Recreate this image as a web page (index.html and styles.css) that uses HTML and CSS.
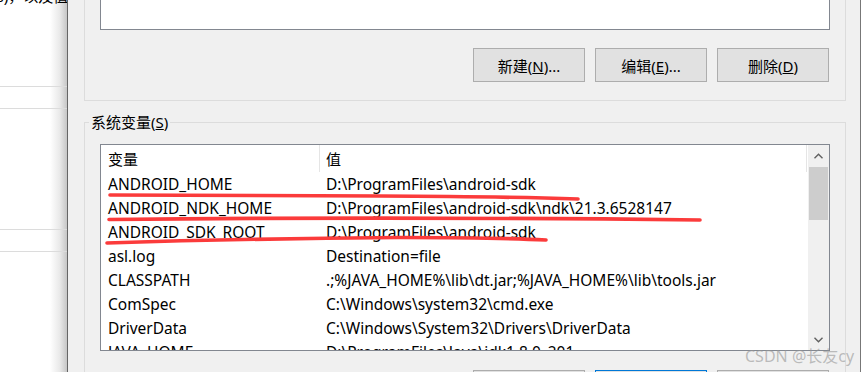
FILE: index.html
```html
<!DOCTYPE html>
<html lang="zh-CN">
  <head>
    <meta charset="UTF-8" />
    <title>环境变量</title>
    <link rel="stylesheet" href="styles.css">
  </head>
  <body>
    <div class="screen">
      <div class="backwin">
        <p class="backwin-text">(s)，以及值</p>
        <div class="backwin-row first"></div>
        <div class="backwin-row second"></div>
      </div>

      <div class="dialog">
        <div class="group group-user">
          <div class="listbox listbox-user"></div>
          <div class="btn-row">
            <button class="btn">新建(<u>N</u>)...</button>
            <button class="btn">编辑(<u>E</u>)...</button>
            <button class="btn">删除(<u>D</u>)</button>
          </div>
        </div>

        <fieldset class="group group-system">
          <legend>系统变量(<u>S</u>)</legend>
          <div class="listbox listbox-system">
            <div class="list-body">
              <div class="list-head">
                <span class="col-name">变量</span>
                <span class="col-value">值</span>
              </div>
              <div class="list-row"><span class="col-name">ANDROID_HOME</span><span class="col-value">D:\ProgramFiles\android-sdk</span></div>
              <div class="list-row"><span class="col-name">ANDROID_NDK_HOME</span><span class="col-value">D:\ProgramFiles\android-sdk\ndk\21.3.6528147</span></div>
              <div class="list-row"><span class="col-name">ANDROID_SDK_ROOT</span><span class="col-value">D:\ProgramFiles\android-sdk</span></div>
              <div class="list-row"><span class="col-name">asl.log</span><span class="col-value">Destination=file</span></div>
              <div class="list-row"><span class="col-name">CLASSPATH</span><span class="col-value">.;%JAVA_HOME%\lib\dt.jar;%JAVA_HOME%\lib\tools.jar</span></div>
              <div class="list-row"><span class="col-name">ComSpec</span><span class="col-value">C:\Windows\system32\cmd.exe</span></div>
              <div class="list-row"><span class="col-name">DriverData</span><span class="col-value">C:\Windows\System32\Drivers\DriverData</span></div>
              <div class="list-row"><span class="col-name">JAVA_HOME</span><span class="col-value">D:\ProgramFiles\Java\jdk1.8.0_201</span></div>
            </div>
            <div class="scrollbar">
              <div class="scroll-arrow">
                <svg width="9" height="6" viewBox="0 0 9 6"><polyline points="0.5,5.2 4.5,1.2 8.5,5.2" fill="none" stroke="#606060" stroke-width="1.4"/></svg>
              </div>
              <div class="scroll-thumb"></div>
              <div class="scroll-track"></div>
              <div class="scroll-arrow">
                <svg width="9" height="6" viewBox="0 0 9 6"><polyline points="0.5,0.8 4.5,4.8 8.5,0.8" fill="none" stroke="#606060" stroke-width="1.4"/></svg>
              </div>
            </div>
          </div>
          <div class="btn-row">
            <button class="btn">新建(<u>W</u>)...</button>
            <button class="btn btn-default">编辑(<u>I</u>)...</button>
            <button class="btn">删除(<u>L</u>)</button>
          </div>
        </fieldset>
      </div>

      <!-- 红色标注线 -->
      <svg class="marks" width="861" height="372" viewBox="0 0 861 372">
        <path d="M110 195 L380 196 Q500 196.5 578 199" />
        <path d="M109 219.5 Q400 216.5 700 220" />
        <path d="M107 243 Q250 238.5 400 237.5 Q500 237.5 546 240" />
      </svg>

      <div class="watermark">CSDN @长友cy</div>
    </div>
  </body>
</html>
```

FILE: styles.css
```css
body {
  margin: 0;
  overflow: hidden;
  background: #f0f0f0;
  font-family: "Noto Sans", "Noto Sans CJK SC", sans-serif;
  font-size: 15px;
  color: #000;
}
.screen {
  position: relative;
  display: flex;
  width: 861px;
  height: 372px;
  overflow: hidden;
}
.backwin {
  width: 67px;
  flex: none;
  overflow: hidden;
  background: linear-gradient(to right, #fff 0, #fff 50px, #e8e8e8 60px, #c6c6c6 67px);
}
.backwin-text {
  margin: -14px 0 0 -8px;
  line-height: 20px;
  white-space: nowrap;
}
.backwin-row {
  height: 21px;
  border-top: 1px solid #dcdcdc;
  border-bottom: 1px solid #dcdcdc;
}
.backwin-row.first {
  margin-top: 80px;
}
.backwin-row.second {
  margin-top: 120px;
}
.dialog {
  box-sizing: border-box;
  width: 794px;
  flex: none;
  padding: 0 14px 0 16px;
  border-left: 1px solid #666;
  border-right: 1px solid #777;
  background: #f0f0f0;
}
.group {
  border: 1px solid #dcdcdc;
  padding: 0 15px;
}
.group-user {
  border-top: none;
  padding-bottom: 18px;
}
.listbox {
  box-sizing: border-box;
  width: 730px;
  border: 1px solid #828790;
  background: #fff;
}
.listbox-user {
  height: 30px;
  border-top: none;
}
.btn-row {
  display: flex;
  justify-content: flex-end;
  gap: 10px;
  margin-top: 18px;
  padding-right: 1px;
}
.btn {
  width: 112px;
  height: 34px;
  border: 1px solid #adadad;
  background: #e1e1e1;
  font-family: inherit;
  font-size: 15px;
  color: #000;
  padding: 0;
}
.btn-default {
  border-color: #0078d7;
}
.group-system {
  margin: 11px 0 0;
  padding-top: 12px;
  padding-bottom: 0;
}
.group-system legend {
  margin-left: -11px;
  padding: 0 2px;
  line-height: 20px;
}
.group-system .btn-row {
  margin-top: 19px;
}
.listbox-system {
  display: flex;
  height: 207px;
}
.list-body {
  flex: 1;
  overflow: hidden;
  font-size: 15.5px;
}
.list-head,
.list-row {
  display: flex;
  white-space: nowrap;
}
.list-head {
  height: 27px;
  line-height: 29px;
  padding-right: 1px;
  font-size: 15px;
}
.list-row {
  height: 24px;
  line-height: 24px;
}
.col-name {
  box-sizing: border-box;
  width: 219px;
  flex: none;
  padding-left: 7px;
}
.col-value {
  flex: 1;
  padding-left: 6px;
}
.list-head .col-name,
.list-head .col-value {
  border-right: 1px solid #e5e5e5;
}
.scrollbar {
  display: flex;
  flex-direction: column;
  width: 21px;
  flex: none;
  background: #f0f0f0;
}
.scroll-arrow {
  display: flex;
  align-items: center;
  justify-content: center;
  height: 21px;
}
.scroll-thumb {
  height: 53px;
  margin: 1px 1px 0;
  background: #cdcdcd;
}
.scroll-track {
  flex: 1;
}
.marks {
  position: absolute;
  top: 0;
  left: 0;
  pointer-events: none;
}
.marks path {
  fill: none;
  stroke: #fb3b3b;
  stroke-width: 3.6;
  stroke-linecap: round;
}
.watermark {
  position: absolute;
  left: 745px;
  top: 345px;
  font-size: 16px;
  line-height: 22px;
  color: rgba(150, 150, 150, 0.6);
  white-space: nowrap;
}
```
